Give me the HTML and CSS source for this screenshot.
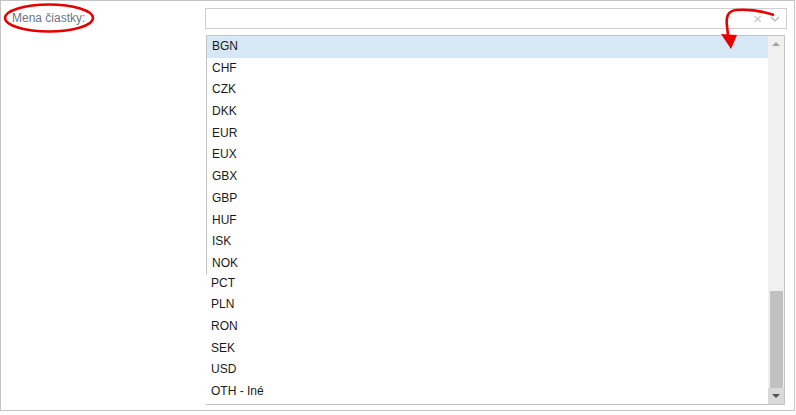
FILE: index.html
```html
<!DOCTYPE html>
<html lang="sk">
<head>
    <meta charset="UTF-8">
    <title>Mena čiastky</title>
    <link rel="stylesheet" href="styles.css">
</head>
<body>
    <div class="panel">
        <div class="field-row">
            <label class="field-label">Mena čiastky:</label>
            <div class="field-control">
                <div class="select-box">
                    <span class="clear-icon">&times;</span>
                    <svg class="chevron" width="10" height="6" viewBox="0 0 10 6"><path d="M1 1 L5 5 L9 1" fill="none" stroke="#b4b4b4" stroke-width="1.2"/></svg>
                </div>
                <div class="dropdown">
                    <div class="options">
                        <ul class="option-list upper">
                            <li class="option selected">BGN</li>
                            <li class="option">CHF</li>
                            <li class="option">CZK</li>
                            <li class="option">DKK</li>
                            <li class="option">EUR</li>
                            <li class="option">EUX</li>
                            <li class="option">GBX</li>
                            <li class="option">GBP</li>
                            <li class="option">HUF</li>
                            <li class="option">ISK</li>
                            <li class="option">NOK</li>
                        </ul>
                        <ul class="option-list lower">
                            <li class="option">PCT</li>
                            <li class="option">PLN</li>
                            <li class="option">RON</li>
                            <li class="option">SEK</li>
                            <li class="option">USD</li>
                            <li class="option">OTH - Iné</li>
                        </ul>
                    </div>
                    <div class="scrollbar">
                        <div class="scroll-btn up"><span class="tri-up"></span></div>
                        <div class="scroll-track">
                            <div class="scroll-thumb"></div>
                        </div>
                        <div class="scroll-btn down"><span class="tri-down"></span></div>
                    </div>
                </div>
            </div>
        </div>

        <!-- poznámky červenou -->
        <svg class="annotation" width="796" height="415" viewBox="0 0 796 415">
            <ellipse cx="49" cy="18" rx="44" ry="13.5" fill="none" stroke="#e60000" stroke-width="2.6"/>
            <path d="M774 15 C762 11 748 9 736 10 C727 11 726 18 727 26 L728 35" fill="none" stroke="#e60000" stroke-width="2.6"/>
            <path d="M721 34 L737 35 L731 49 Z" fill="#e60000"/>
        </svg>
    </div>
</body>
</html>
```

FILE: styles.css
```css
body {
    margin: 0;
    padding: 0;
    background: #FFFFFF;
    font-family: 'Liberation Sans', Arial, sans-serif;
    font-size: 12px;
}
.panel {
    position: relative;
    width: 795px;
    height: 411px;
    box-sizing: border-box;
    border: 1px solid #c4c4c4;
}
.field-row {
    display: flex;
    padding-top: 7px;
}
.field-label {
    width: 193px;
    padding-left: 11px;
    padding-top: 3px;
    color: #6b7684;
    font-size: 12px;
}
.field-control {
    display: flex;
    flex-direction: column;
}
.select-box {
    width: 582px;
    height: 21px;
    box-sizing: border-box;
    border: 1px solid #cfcfcf;
    display: flex;
    align-items: center;
    justify-content: flex-end;
    padding-right: 6px;
    gap: 8px;
}
.clear-icon {
    color: #c4c4c4;
    font-size: 15px;
    line-height: 1;
    margin-top: -1px;
}
.chevron {
    display: block;
}
.dropdown {
    width: 579px;
    height: 370px;
    margin-top: 6px;
    margin-left: 1px;
    box-sizing: border-box;
    border-top: 1px solid #c4c4c4;
    border-right: 1px solid #c4c4c4;
    border-bottom: 1px solid #c4c4c4;
    display: flex;
}
.options {
    flex: 1;
}
.option-list {
    list-style: none;
    margin: 0;
    padding: 0;
}
.option-list.upper {
    border-left: 1px solid #c4c4c4;
}
.option-list.lower {
    margin-top: -2px;
}
.option {
    height: 21.7px;
    line-height: 21px;
    padding-left: 5px;
    color: #1a1a1a;
}
.option-list.upper .option {
    padding-left: 5px;
}
.option.selected {
    background: #d6e7f5;
}
.scrollbar {
    width: 16px;
    display: flex;
    flex-direction: column;
    background: #f0f0f0;
}
.scroll-btn {
    height: 16px;
    display: flex;
    align-items: center;
    justify-content: center;
}
.scroll-btn.down {
    background: #dadada;
}
.tri-up {
    width: 0;
    height: 0;
    border-left: 4px solid transparent;
    border-right: 4px solid transparent;
    border-bottom: 4px solid #a3a3a3;
}
.tri-down {
    width: 0;
    height: 0;
    border-left: 4px solid transparent;
    border-right: 4px solid transparent;
    border-top: 4px solid #505050;
}
.scroll-track {
    flex: 1;
    display: flex;
    flex-direction: column;
    justify-content: flex-end;
    padding: 0 1px 0 2px;
}
.scroll-thumb {
    height: 97px;
    background: #c1c1c1;
}
.annotation {
    position: absolute;
    top: -1px;
    left: -1px;
    pointer-events: none;
}
```
